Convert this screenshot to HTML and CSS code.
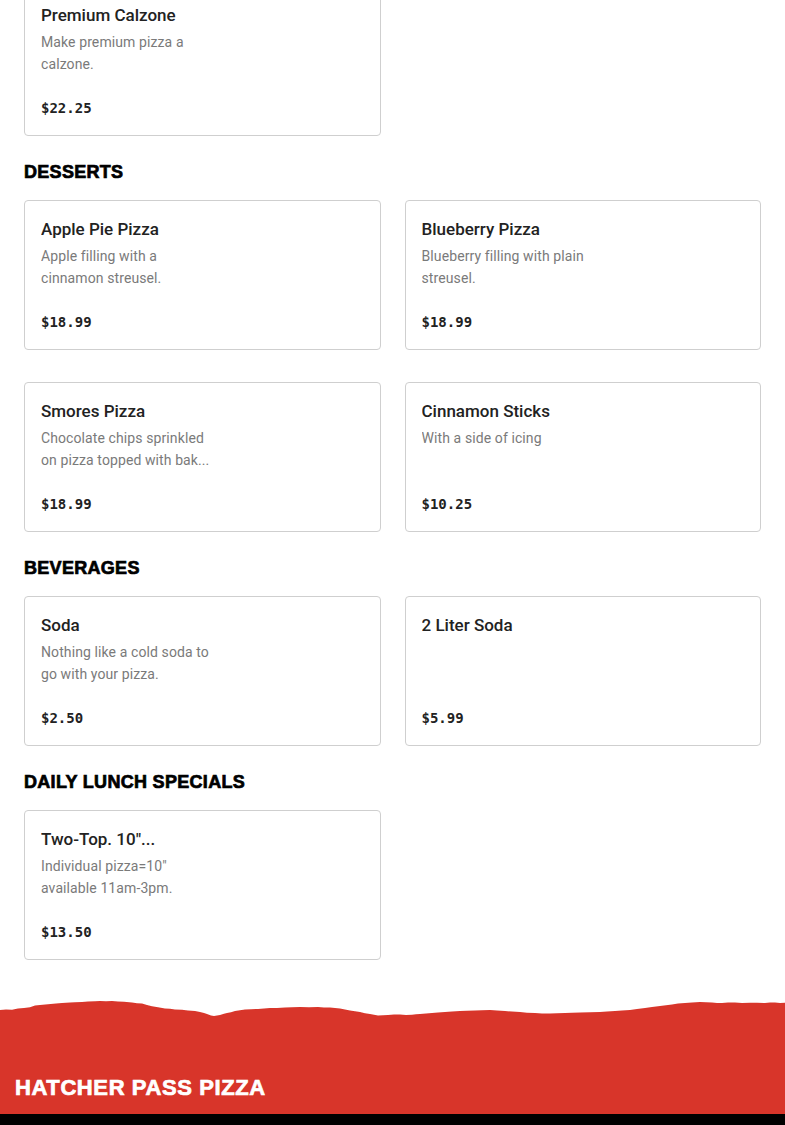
FILE: index.html
```html
<!DOCTYPE html>
<html lang="en">
<head>
<meta charset="utf-8">
<title>Hatcher Pass Pizza - Menu</title>
<link rel="stylesheet" href="styles.css">
</head>
<body>
<main class="menu">
  <section class="section section-first">
    <div class="grid">
      <article class="card">
        <h3 class="card-title">Premium Calzone</h3>
        <p class="card-desc">Make premium pizza a calzone.</p>
        <p class="card-price">$22.25</p>
      </article>
    </div>
  </section>

  <section class="section">
    <h2 class="section-title">DESSERTS</h2>
    <div class="grid">
      <article class="card">
        <h3 class="card-title">Apple Pie Pizza</h3>
        <p class="card-desc">Apple filling with a cinnamon streusel.</p>
        <p class="card-price">$18.99</p>
      </article>
      <article class="card">
        <h3 class="card-title">Blueberry Pizza</h3>
        <p class="card-desc">Blueberry filling with plain streusel.</p>
        <p class="card-price">$18.99</p>
      </article>
      <article class="card">
        <h3 class="card-title">Smores Pizza</h3>
        <p class="card-desc">Chocolate chips sprinkled on pizza topped with bak...</p>
        <p class="card-price">$18.99</p>
      </article>
      <article class="card">
        <h3 class="card-title">Cinnamon Sticks</h3>
        <p class="card-desc">With a side of icing</p>
        <p class="card-price">$10.25</p>
      </article>
    </div>
  </section>

  <section class="section">
    <h2 class="section-title">BEVERAGES</h2>
    <div class="grid">
      <article class="card">
        <h3 class="card-title">Soda</h3>
        <p class="card-desc">Nothing like a cold soda to go with your pizza.</p>
        <p class="card-price">$2.50</p>
      </article>
      <article class="card">
        <h3 class="card-title">2 Liter Soda</h3>
        <p class="card-desc"></p>
        <p class="card-price">$5.99</p>
      </article>
    </div>
  </section>

  <section class="section">
    <h2 class="section-title">DAILY LUNCH SPECIALS</h2>
    <div class="grid">
      <article class="card">
        <h3 class="card-title">Two-Top. 10"...</h3>
        <p class="card-desc">Individual pizza=10" available 11am-3pm.</p>
        <p class="card-price">$13.50</p>
      </article>
    </div>
  </section>
</main>

<footer class="footer">
  <svg class="torn-edge" viewBox="0 0 785 20" preserveAspectRatio="none" aria-hidden="true">
    <path fill="#d8352a" d="M0 13 L6 12.6 L12 12.8 L18 11.6 L24 11 L30 10.2 L35 8.6 L40 8 L48 7.2 L56 6.4 L62 6 L70 5.6 L75 5.2 L82 5 L88 4.4 L95 4.2 L100 4 L106 4.3 L112 4.1 L118 4.6 L124 4.8 L132 5.5 L137 6.2 L142 6.6 L147 8 L152 9.2 L158 10.2 L165 11.5 L170 11.8 L175 12.5 L182 12.8 L188 13.5 L195 14 L200 15 L204 16 L207 17 L211 18.4 L214 19 L217 18.6 L220 18 L224 16.8 L227 16 L231 15.2 L235 14 L240 13.2 L245 12.5 L251 12.2 L258 12 L264 11.6 L270 11 L277 10.9 L285 10.5 L292 10.2 L300 10 L309 10.2 L318 10 L324 10.4 L330 10.5 L335 11 L340 11.5 L345 12.6 L350 13.5 L355 14.2 L360 15 L365 16.2 L370 17 L374 17.8 L378 18.5 L383 18.2 L388 18 L394 17.4 L400 17.5 L406 17.9 L412 17.8 L416 17.2 L420 17 L426 16.6 L432 16 L438 15.6 L445 15 L452 14.5 L460 14 L467 13.8 L475 13.5 L482 13.2 L490 13 L497 13.6 L505 14 L512 14.6 L520 15 L527 15.7 L535 16 L542 16.6 L550 16.5 L557 16.2 L565 16 L572 15.8 L580 15.5 L590 15.2 L600 15 L607 14.6 L615 14 L622 13.4 L630 13 L637 12 L645 11 L652 10 L660 9 L666 8.2 L672 7.5 L678 6.6 L685 6 L692 5.4 L700 5 L706 5.2 L712 5.5 L717 5.9 L722 6 L728 5.6 L735 5.5 L742 5.9 L750 5.8 L757 5.7 L765 6 L770 5.4 L775 5.5 L780 6 L785 5.8 L785 20 L0 20 Z"/>
  </svg>
  <div class="footer-body">
    <p class="footer-title">HATCHER PASS PIZZA</p>
  </div>
  <div class="footer-bar"></div>
</footer>
</body>
</html>
```

FILE: styles.css
```css
* {
  box-sizing: border-box;
}

html, body {
  margin: 0;
  padding: 0;
  background: #ffffff;
}

body {
  font-family: Roboto, "Liberation Sans", Arial, sans-serif;
  color: #222222;
  overflow: hidden;
}

.menu {
  padding: 0 24px;
  margin-top: -14px;
}

.section {
  display: flex;
  flex-direction: column;
}

.section-title {
  margin: 24px 0 16px;
  font-family: "Liberation Sans", Arial, sans-serif;
  font-weight: 900;
  font-size: 18px;
  line-height: 24px;
  letter-spacing: 0.3px;
  color: #000000;
  -webkit-text-stroke: 0.7px #000000;
}

.grid {
  display: grid;
  grid-template-columns: 1fr 1fr;
  column-gap: 24px;
  row-gap: 32px;
}

.card {
  border: 1px solid #cfcfcf;
  border-radius: 4px;
  padding: 16px 16px 17px;
  background: #ffffff;
  display: flex;
  flex-direction: column;
}

.card-title {
  margin: 0 0 4px;
  font-size: 17px;
  line-height: 24px;
  font-weight: 500;
  color: #222222;
  white-space: nowrap;
  overflow: hidden;
  text-overflow: ellipsis;
}

.card-desc {
  margin: 0;
  width: 55%;
  height: 44px;
  font-size: 14px;
  line-height: 22px;
  font-weight: 400;
  letter-spacing: 0.1px;
  color: #7a7a7a;
  overflow: hidden;
}

.card-price {
  margin: 23px 0 0;
  font-family: "DejaVu Sans Mono", "Liberation Mono", monospace;
  font-weight: 700;
  font-size: 14px;
  line-height: 20px;
  color: #222222;
}

.footer {
  margin-top: 37px;
  display: flex;
  flex-direction: column;
}

.torn-edge {
  display: block;
  width: 100%;
  height: 20px;
}

.footer-body {
  background: #d8352a;
  padding: 58px 15px 12px;
  margin-top: -1px;
}

.footer-title {
  margin: 0;
  font-family: "Liberation Sans", Arial, sans-serif;
  font-weight: 900;
  font-size: 22px;
  line-height: 28px;
  color: #ffffff;
  letter-spacing: 0.6px;
  -webkit-text-stroke: 0.7px #ffffff;
}

.footer-bar {
  background: #000000;
  height: 60px;
}
```
